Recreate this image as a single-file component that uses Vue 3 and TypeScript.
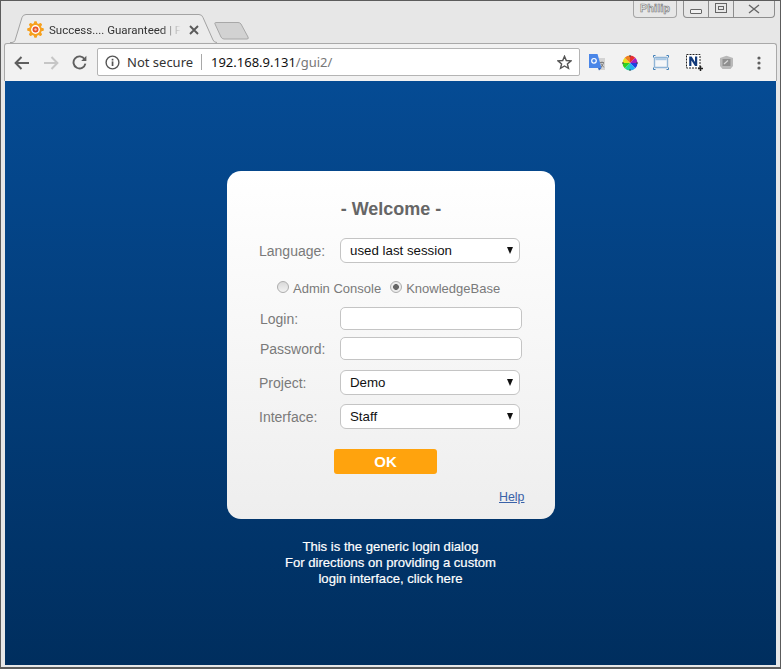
<script setup lang="ts">
const loginRows: string[] = ['Login:', 'Password:']
const footer: string[] = [
  'This is the generic login dialog',
  'For directions on providing a custom',
  'login interface, click here',
]
</script>

<template>
  <div class="window">
    <header class="strip">
      <div class="tab">
        <svg class="tab-shape" width="208" height="29" viewBox="0 0 208 29">
          <path d="M0 28.5H2Q4 28.5 5 26.5L12 3.5Q13 0.5 16 0.5H189Q192 0.5 193 3.5L203 26Q204 28.5 207 28.5" fill="#ececec" stroke="#a3a3a3" />
        </svg>
        <svg class="favicon" width="17" height="17" viewBox="0 0 17 17">
          <g fill="#f6a01e">
            <circle cx="8.5" cy="8.5" r="6.4" />
            <rect x="7" y="0.2" width="3" height="16.6" rx="1" />
            <rect x="0.2" y="7" width="16.6" height="3" rx="1" />
            <rect x="7" y="0.2" width="3" height="16.6" rx="1" transform="rotate(45 8.5 8.5)" />
            <rect x="7" y="0.2" width="3" height="16.6" rx="1" transform="rotate(-45 8.5 8.5)" />
          </g>
          <circle cx="8.5" cy="8.5" r="4.4" fill="#fff" />
          <circle cx="8.5" cy="8.5" r="3" fill="#e8532b" />
          <circle cx="8.5" cy="8.5" r="1.2" fill="#f9c4a8" />
        </svg>
        <span class="tab-title">Success.... Guaranteed | F</span>
        <svg class="tab-close" width="10" height="10" viewBox="0 0 10 10">
          <path d="M1 1L9 9M9 1L1 9" stroke="#5a5a5a" stroke-width="1.9" />
        </svg>
      </div>
      <svg class="newtab" width="36" height="19" viewBox="0 0 36 19">
        <path d="M1.5 1.5H24Q26 1.5 27 3L34 16Q35 18 33 18H10Q8 18 7 16L1 3Q0.5 1.5 1.5 1.5Z" fill="#d2d2d2" stroke="#a8a8a8" />
      </svg>
      <div class="caption">
        <div class="profile">Philip</div>
        <div class="controls">
          <div class="ctl"><span class="min"></span></div>
          <div class="ctl"><span class="max"><i></i></span></div>
          <div class="ctl close">
            <svg width="12" height="10" viewBox="0 0 12 10">
              <path d="M1 1L11 9M11 1L1 9" stroke="#666" stroke-width="1.4" fill="none" />
            </svg>
          </div>
        </div>
      </div>
    </header>

    <nav class="toolbar">
      <svg class="nav back" width="16" height="14" viewBox="0 0 16 14">
        <path d="M15 7H2M7.5 1L1.6 7L7.5 13" fill="none" stroke="#5f5f5f" stroke-width="2" />
      </svg>
      <svg class="nav fwd" width="16" height="14" viewBox="0 0 16 14">
        <path d="M1 7H14M8.5 1L14.4 7L8.5 13" fill="none" stroke="#c6c6c6" stroke-width="2" />
      </svg>
      <svg class="nav reload" width="15" height="15" viewBox="0 0 15 15">
        <path d="M12.6 4.2A6 6 0 1 0 13.4 8.6" fill="none" stroke="#5f5f5f" stroke-width="1.9" />
        <path d="M14.4 0.8V6H9.2Z" fill="#5f5f5f" />
      </svg>

      <div class="omnibox">
        <svg class="info" width="15" height="15" viewBox="0 0 15 15">
          <circle cx="7.5" cy="7.5" r="6.4" fill="none" stroke="#555" stroke-width="1.4" />
          <rect x="6.7" y="6.4" width="1.7" height="4.6" fill="#555" />
          <rect x="6.7" y="3.8" width="1.7" height="1.7" fill="#555" />
        </svg>
        <span class="secure">Not secure</span>
        <span class="sep"></span>
        <span class="url">192.168.9.131<span class="path">/gui2/</span></span>
        <svg class="star" width="15" height="15" viewBox="0 0 15 15">
          <path d="M7.5 1.3L9.3 5.5L13.9 5.9L10.4 8.9L11.5 13.4L7.5 11L3.5 13.4L4.6 8.9L1.1 5.9L5.7 5.5Z" fill="none" stroke="#555" stroke-width="1.4" />
        </svg>
      </div>

      <div class="extensions">
        <svg class="ext" width="17" height="17" viewBox="0 0 17 17">
          <path d="M8 4H16V16H10Z" fill="#d3d3d3" />
          <path d="M11 8.5H15M13 7.5V8.5M11.6 14L14.6 9.2M12 9.5L14.8 13.4" stroke="#777" stroke-width="0.9" fill="none" />
          <path d="M0 0H8.5L12.5 14H0Z" fill="#4a86e8" />
          <path d="M9 14H12.5L10 16.5Z" fill="#3367c0" />
          <circle cx="5" cy="6.8" r="2.3" fill="none" stroke="#fff" stroke-width="1.2" />
        </svg>
        <svg class="ext" width="16" height="16" viewBox="0 0 16 16">
          <path d="M8 8L8 0.5A7.5 7.5 0 0 1 13.3 2.7Z" fill="#e83030" />
          <path d="M8 8L13.3 2.7A7.5 7.5 0 0 1 15.5 8Z" fill="#a020c0" />
          <path d="M8 8L15.5 8A7.5 7.5 0 0 1 13.3 13.3Z" fill="#2040e0" />
          <path d="M8 8L13.3 13.3A7.5 7.5 0 0 1 8 15.5Z" fill="#20b0f0" />
          <path d="M8 8L8 15.5A7.5 7.5 0 0 1 2.7 13.3Z" fill="#20d8a0" />
          <path d="M8 8L2.7 13.3A7.5 7.5 0 0 1 0.5 8Z" fill="#30d020" />
          <path d="M8 8L0.5 8A7.5 7.5 0 0 1 2.7 2.7Z" fill="#e8e020" />
          <path d="M8 8L2.7 2.7A7.5 7.5 0 0 1 8 0.5Z" fill="#f08020" />
          <path d="M8 0V2M8 14V16M0 8H2M14 8H16" stroke="#444" stroke-width="1" />
        </svg>
        <svg class="ext" width="16" height="15" viewBox="0 0 16 15">
          <rect x="1.5" y="2.5" width="13" height="10" rx="1" fill="#f4f6f8" stroke="#8fb4d6" stroke-width="1.4" />
          <rect x="2.5" y="3.2" width="11" height="2" fill="#a9c8e4" />
          <path d="M0.5 2.5V0.5H2.5M13.5 0.5H15.5V2.5M15.5 12.5V14.5H13.5M2.5 14.5H0.5V12.5" stroke="#3f7fb8" fill="none" />
        </svg>
        <svg class="ext" width="17" height="17" viewBox="0 0 17 17">
          <rect x="0.5" y="0.5" width="13.5" height="13.5" fill="#fff" stroke="#222" stroke-dasharray="2 1" />
          <path d="M3.2 12V2.6H5.6L9 8V2.6H11.2V12H9L5.4 6.4V12Z" fill="#123a7a" />
          <path d="M12 14.5H17M14.5 12V17" stroke="#222" stroke-width="1.5" />
        </svg>
        <svg class="ext" width="15" height="15" viewBox="0 0 15 15">
          <path d="M7.5 0.8L14 3V11L11.5 14H3.5L1 11V3Z" fill="#b9b9b9" />
          <rect x="3.5" y="4" width="8" height="7" fill="#8f8f8f" />
          <path d="M5 9L9 5.5" stroke="#d8d8d8" stroke-width="1.2" />
        </svg>
        <svg class="ext dots" width="4" height="14" viewBox="0 0 4 14">
          <circle cx="2" cy="2" r="1.6" fill="#5f5f5f" />
          <circle cx="2" cy="7" r="1.6" fill="#5f5f5f" />
          <circle cx="2" cy="12" r="1.6" fill="#5f5f5f" />
        </svg>
      </div>
    </nav>

    <main class="page">
      <section class="card">
        <h1 class="welcome">- Welcome -</h1>

        <div class="row row-language">
          <label class="label">Language:</label>
          <div class="select">used last session<span class="arrow"></span></div>
        </div>

        <div class="radios">
          <span class="radio"></span><span class="radio-text">Admin Console</span>
          <span class="radio checked"></span><span class="radio-text">KnowledgeBase</span>
        </div>

        <div class="inputs">
          <div v-for="name in loginRows" :key="name" class="row">
            <label class="label">{{ name }}</label>
            <input class="input" type="text" :aria-label="name" />
          </div>
        </div>

        <div class="row row-project">
          <label class="label">Project:</label>
          <div class="select">Demo<span class="arrow"></span></div>
        </div>
        <div class="row row-interface">
          <label class="label">Interface:</label>
          <div class="select">Staff<span class="arrow"></span></div>
        </div>

        <button class="ok" type="button">OK</button>
        <a class="help" href="#">Help</a>
      </section>

      <p class="note">
        <span v-for="line in footer" :key="line" class="note-line">{{ line }}</span>
      </p>
    </main>
  </div>
</template>

<style scoped>
.window {
  width: 781px;
  height: 669px;
  box-sizing: border-box;
  border: 1px solid #5c5c5c;
  border-bottom-width: 2px;
  background: #e7e7e7;
  padding: 0 3px 2px 3px;
  display: flex;
  flex-direction: column;
  overflow: hidden;
}
.strip {
  position: relative;
  flex: 0 0 42px;
  display: flex;
  align-items: flex-end;
}
.tab {
  position: relative;
  width: 208px;
  height: 29px;
  margin-left: 6px;
  box-sizing: border-box;
  padding-top: 2px;
  display: flex;
  align-items: center;
  z-index: 1;
  font: 11.5px Roboto, sans-serif;
  color: #333;
}
.tab-shape {
  position: absolute;
  left: 0;
  top: 0;
}
.favicon {
  position: relative;
  margin-left: 17px;
  flex: none;
}
.tab-title {
  position: relative;
  margin-left: 5px;
  width: 132px;
  white-space: nowrap;
  -webkit-mask-image: linear-gradient(to right, #000 85%, transparent 100%);
  mask-image: linear-gradient(to right, #000 85%, transparent 100%);
}
.tab-close {
  position: relative;
  margin-left: 8px;
}
.newtab {
  margin: 0 0 3px -4px;
}
.caption {
  position: absolute;
  top: 0;
  right: 2px;
  display: flex;
  gap: 6px;
}
.profile {
  width: 44px;
  height: 17px;
  box-sizing: border-box;
  border: 1px solid #a5a5a5;
  border-top: 0;
  border-radius: 0 0 4px 4px;
  text-align: center;
  font: bold 11px/15px "Liberation Sans", sans-serif;
  color: #efefef;
  -webkit-text-stroke: 0.6px #777;
}
.controls {
  display: flex;
  width: 92px;
  height: 17px;
  box-sizing: border-box;
  border: 1px solid #8d8d8d;
  border-top: 0;
  border-radius: 0 0 4px 4px;
}
.ctl {
  flex: 0 0 25px;
  box-sizing: border-box;
  border-right: 1px solid #8d8d8d;
  display: flex;
  align-items: center;
  justify-content: center;
}
.ctl.close {
  flex: 1;
  border-right: 0;
}
.min {
  width: 10px;
  height: 3px;
  margin-top: 5px;
  border: 1px solid #666;
  border-radius: 1px;
  background: #f0f0f0;
}
.max {
  width: 10px;
  height: 8px;
  border: 1px solid #666;
  display: flex;
  align-items: center;
  justify-content: center;
  margin-top: -2px;
}
.max i {
  width: 6px;
  height: 4px;
  border: 1px solid #666;
  box-sizing: border-box;
}
.toolbar {
  flex: 0 0 38px;
  box-sizing: border-box;
  display: flex;
  align-items: center;
  background: #f2f2f2;
  border: 1px solid #a9a9a9;
  border-bottom: 0;
  border-radius: 3px 3px 0 0;
  position: relative;
}
.nav {
  flex: none;
}
.back {
  margin-left: 9px;
}
.fwd {
  margin-left: 13px;
}
.reload {
  margin-left: 13px;
}
.omnibox {
  margin: -1px 0 0 10px;
  width: 483px;
  height: 28px;
  box-sizing: border-box;
  background: #fff;
  border: 1px solid #b4b4b4;
  border-radius: 2px;
  display: flex;
  align-items: center;
  font: 13px "Noto Sans", sans-serif;
  color: #333;
}
.info {
  margin-left: 7px;
  flex: none;
}
.secure {
  margin-left: 7px;
  width: 67px;
  white-space: nowrap;
}
.sep {
  width: 1px;
  height: 16px;
  background: #a8a8a8;
  margin-left: 7px;
}
.url {
  margin-left: 9px;
  color: #111;
  white-space: nowrap;
}
.path {
  color: #777;
}
.star {
  margin-left: auto;
  margin-right: 7px;
  flex: none;
}
.extensions {
  flex: 1;
  display: flex;
  align-items: center;
  gap: 16px;
  padding-left: 9px;
}
.ext:nth-child(3) {
  margin-left: -1px;
}
.ext:nth-child(4) {
  margin-left: 1px;
}
.dots {
  margin-left: 7px;
}
.page {
  flex: 1;
  margin: 0 1px;
  background: linear-gradient(#054b94, #002e5e);
  display: flex;
  flex-direction: column;
  align-items: center;
  padding-top: 90px;
}
.card {
  width: 328px;
  height: 348px;
  box-sizing: border-box;
  padding: 27px 0 0 32px;
  border-radius: 14px;
  background: linear-gradient(#fff, #eeeeee);
  font: 14px "Liberation Sans", Arial, sans-serif;
  color: #7a7a7a;
  display: flex;
  flex-direction: column;
  margin-left: 1px;
}
.welcome {
  margin: 0;
  width: 264px;
  text-align: center;
  font: bold 18px/22px "Liberation Sans", Arial, sans-serif;
  color: #666;
}
.row {
  display: flex;
  align-items: center;
}
.label {
  width: 81px;
  flex: none;
}
.row-language {
  margin-top: 18px;
}
.select {
  position: relative;
  width: 180px;
  height: 25px;
  box-sizing: border-box;
  background: #fff;
  border: 1px solid #c4c4c4;
  border-radius: 6px;
  padding-left: 9px;
  font-size: 13.3px;
  line-height: 23px;
  color: #111;
}
.arrow {
  position: absolute;
  right: 6px;
  top: 8px;
  width: 0;
  height: 0;
  border-left: 3.5px solid transparent;
  border-right: 3.5px solid transparent;
  border-top: 7px solid #111;
}
.radios {
  display: flex;
  align-items: center;
  height: 18px;
  margin: 16px 0 0 18px;
  font-size: 13px;
}
.radio {
  width: 12px;
  height: 12px;
  box-sizing: border-box;
  border: 1px solid #adadad;
  border-radius: 50%;
  background: linear-gradient(#d9d9d9, #f2f2f2);
  margin-top: -3px;
  flex: none;
}
.radio.checked {
  background: radial-gradient(circle, #666 0 2.6px, #ececec 3.2px);
  margin-left: 9px;
}
.radio-text {
  margin-left: 4px;
}
.inputs {
  display: flex;
  flex-direction: column;
  gap: 7px;
  margin-top: 10px;
}
.inputs .label {
  padding-left: 1px;
  box-sizing: border-box;
}
.input {
  width: 182px;
  height: 23px;
  box-sizing: border-box;
  border: 1px solid #c4c4c4;
  border-radius: 5px;
  background: #fff;
  padding: 0;
}
.row-project {
  margin-top: 10px;
}
.row-interface {
  margin-top: 9px;
}
.ok {
  width: 103px;
  height: 25px;
  margin: 20px 0 0 75px;
  padding: 0;
  border: 0;
  border-radius: 3px;
  background: #ffa30d;
  color: #fff;
  font: bold 15px "Liberation Sans", Arial, sans-serif;
}
.help {
  align-self: flex-start;
  margin: 16px 0 0 240px;
  font-size: 12.4px;
  color: #3a62a8;
}
.note {
  margin: 20px 0 0;
  font: 13.1px/16px "Liberation Sans", Arial, sans-serif;
  color: #fff;
  text-align: center;
  -webkit-text-stroke: 0.2px #fff;
}
.note-line {
  display: block;
}
</style>

<style>
html,
body {
  margin: 0;
  background: #fff;
}
</style>
